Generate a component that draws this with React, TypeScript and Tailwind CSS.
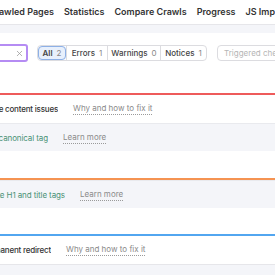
import { X } from 'lucide-react';

const navItems = ['Statistics', 'Compare Crawls', 'Progress', 'JS Impact'];

const filters = [
  { label: 'All', count: 2, active: true, width: 'w-[28px]' },
  { label: 'Errors', count: 1, active: false, width: 'w-[41px]' },
  { label: 'Warnings', count: 0, active: false, width: 'w-[53px]' },
  { label: 'Notices', count: 1, active: false, width: 'w-[46px]' },
];

// title box is right-anchored: the start of a long title runs off the left edge
function HeaderRow({ title, width }: { title: string; width: string }) {
  return (
    <div className="h-[28px] flex items-center overflow-hidden bg-white whitespace-nowrap">
      <div className={`${width} shrink-0 flex justify-end overflow-hidden`}>
        <span className="shrink-0 text-[#333] font-medium tracking-[-0.2px]">{title}</span>
      </div>
      <a className="ml-[15px] text-[#8a8a8a] border-b border-dotted border-[#9a9a9a] leading-[11px]">
        Why and how to fix it
      </a>
    </div>
  );
}

function CheckRow({ title, width }: { title: string; width: string }) {
  return (
    <div className="h-[28px] flex items-center overflow-hidden bg-[#f4f5f9] border-t border-[#e9eaee] whitespace-nowrap">
      <div className={`${width} shrink-0 flex justify-end overflow-hidden`}>
        <span className="shrink-0 text-[#4a9276] tracking-[-0.1px]">{title}</span>
      </div>
      <a className="ml-[15px] text-[#8a8a8a] border-b border-dotted border-[#9a9a9a] leading-[11px]">
        Learn more
      </a>
    </div>
  );
}

export default function App() {
  return (
    <div className="w-[275px] h-[275px] overflow-hidden bg-white text-[8px]" style={{ fontFamily: 'Inter, "Noto Sans", sans-serif' }}>
      {/* Tabs */}
      <div className="h-[25px] border-b border-[#e6e6ea] flex items-center gap-[10px] whitespace-nowrap overflow-hidden text-[9px] font-semibold text-[#333]">
        <div className="w-[54px] shrink-0 flex justify-end overflow-hidden">
          <span className="shrink-0">Crawled Pages</span>
        </div>
        {navItems.map((item) => (
          <span key={item} className="shrink-0">
            {item}
          </span>
        ))}
      </div>
      <div className="h-[8px] bg-[#f4f5f9]" />

      {/* Filters */}
      <div className="h-[60px] pt-[11px] flex items-start whitespace-nowrap overflow-hidden">
        <div className="w-[28px] h-[18px] shrink-0 flex justify-end overflow-hidden">
          <div className="w-[88px] h-[18px] shrink-0 rounded-[3px] border-2 border-[#b58cf3] flex items-center justify-end pr-[2px]">
            <X className="w-[9px] h-[9px] text-[#9a9a9a]" strokeWidth={2} />
          </div>
        </div>
        <div className="ml-[9px] mt-[1px] h-[16px] flex shrink-0 rounded-[4px] border border-[#dcdce0]">
          {filters.map((f, i) => (
            <div
              key={f.label}
              className={`${f.width} flex items-center justify-center gap-[4px] ${
                i > 0 ? 'border-l border-[#dcdce0]' : ''
              } ${f.active ? 'bg-[#e8f0fc] outline outline-[#8db0e6] rounded-[4px] -outline-offset-1' : ''}`}
            >
              <span className={`${f.active ? 'font-semibold' : 'font-medium'} text-[#444]`}>{f.label}</span>
              <span className="text-[#888]">{f.count}</span>
            </div>
          ))}
        </div>
        <div className="ml-[10px] mt-[1px] h-[16px] w-[120px] shrink-0 rounded-[4px] border border-[#dcdce0] flex items-center px-[6px] text-[#b5b5b5]">
          Triggered checks
        </div>
      </div>

      {/* Errors */}
      <div className="border-t-2 border-[#ee5b5b]">
        <HeaderRow title="Duplicate content issues" width="w-[58px]" />
        <CheckRow title="Duplicate pages without canonical tag" width="w-[48px]" />
      </div>
      <div className="h-[27px]" />

      {/* Warnings */}
      <div className="border-t-2 border-[#f59352]">
        <CheckRow title="Duplicate H1 and title tags" width="w-[65px]" />
      </div>
      <div className="h-[26px]" />

      {/* Notices */}
      <div className="border-t-2 border-[#52a6f0] border-b border-b-[#e6e6ea]">
        <HeaderRow title="Permanent redirect" width="w-[51px]" />
      </div>
      <div className="h-[20px] bg-[#f4f5f9]" />
    </div>
  );
}
